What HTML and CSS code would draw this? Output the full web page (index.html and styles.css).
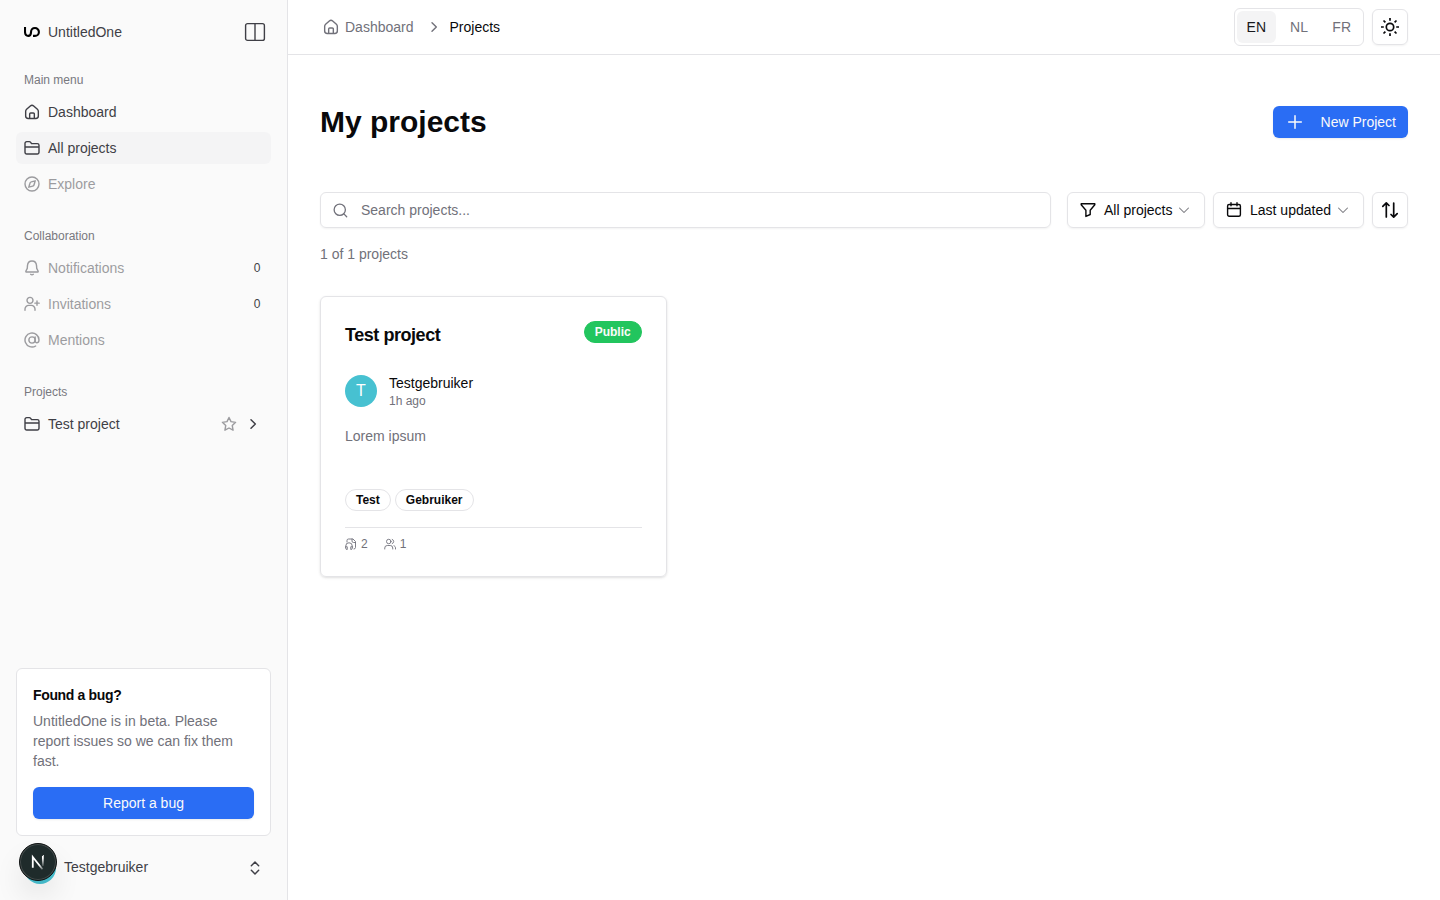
FILE: index.html
```html
<!DOCTYPE html>
<html lang="en">
<head>
<meta charset="utf-8">
<title>UntitledOne – Projects</title>
<link rel="stylesheet" href="styles.css">
</head>
<body>
<svg class="defs" aria-hidden="true">
  <symbol id="house" viewBox="0 0 24 24"><path d="M8.500 21.500V15a1.500 1.500 0 0 1 1.500-1.500h4a1.500 1.500 0 0 1 1.500 1.500v6.500"/><path d="M2.500 11c0-1.300.4-2.100 1.400-3l5.600-5c1.400-1.300 3.600-1.300 5 0l5.600 5c1 .9 1.400 1.700 1.400 3v7c0 2.500-1.400 3.700-3.800 3.700H6.300c-2.400 0-3.800-1.200-3.800-3.700z"/></symbol>
  <symbol id="folder" viewBox="0 0 24 24"><path d="M1.500 18.500V5a2.500 2.500 0 0 1 2.500-2.500h4c.8 0 1.500.4 2 1l1.300 2h8.700a2.500 2.500 0 0 1 2.500 2.500v10.500a2.500 2.500 0 0 1-2.500 2.500H4a2.500 2.500 0 0 1-2.500-2.500zM1.500 10.500h21"/></symbol>
  <symbol id="compass" viewBox="0 0 24 24"><circle cx="12" cy="12" r="10.500"/><path d="M16.800 7.200l-1.700 5.900a2.800 2.800 0 0 1-2 2l-5.900 1.700 1.700-5.900a2.800 2.800 0 0 1 2-2z"/></symbol>
  <symbol id="bell" viewBox="0 0 24 24"><path d="M12 1.500c-4 0-6.500 3-6.800 7L4.900 12.500 2.900 16.500c-.4 1 0 1.500 1 1.500h16.200c1 0 1.400-.5 1-1.500l-2-4-.3-4c-.3-4-2.800-7-6.800-7zM10 21.500c1.200 1 2.800 1 4 0"/></symbol>
  <symbol id="invite" viewBox="0 0 24 24"><circle cx="9" cy="6.500" r="4.500"/><path d="M1.500 21.500v-2a5.500 5.500 0 0 1 5.500-5.500h4a5.500 5.500 0 0 1 5.500 5.500v2M19.500 7.500v6.500M16.300 10.700h6.500"/></symbol>
  <symbol id="at" viewBox="0 0 24 24"><circle cx="12" cy="12" r="4.700"/><path d="M16.700 7.300V13c0 4.400 5.800 4 5.800-1A10.500 10.500 0 1 0 17.500 21"/></symbol>
  <symbol id="star" viewBox="0 0 24 24"><path d="M12 2.200l3 6.300 6.900 1-5 4.900 1.200 6.900-6.100-3.300-6.100 3.300 1.200-6.900-5-4.900 6.900-1z"/></symbol>
  <symbol id="right" viewBox="0 0 24 24"><path d="m9 5.500 6.500 6.500L9 18.500"/></symbol>
  <symbol id="down" viewBox="0 0 24 24"><path d="m3 8 9 9 9-9"/></symbol>
  <symbol id="file" viewBox="0 0 24 24"><path d="M4 8V5a3 3 0 0 1 3-3h9l5 5v12a3 3 0 0 1-3 3M14 2v4a3 3 0 0 0 3 3h4M1.500 17v-1a6.500 6.500 0 0 1 13 0v1M1.500 17.500h3V23h-1a2 2 0 0 1-2-2zM14.500 17.500h-3V23h1a2 2 0 0 0 2-2z"/></symbol>
  <symbol id="users" viewBox="0 0 24 24"><circle cx="9.500" cy="7" r="4.500"/><path d="M1.500 22v-2a5 5 0 0 1 5-5h6a5 5 0 0 1 5 5v2M16.500 2.800a4.500 4.500 0 0 1 0 8.400M20 15.500c2 .8 3 2.300 3 4.500v2"/></symbol>
</svg>

<div class="app">
  <aside class="sidebar">
    <div class="brand">
      <svg class="logo" viewBox="0 0 16 12"><path d="M1 .9v4.600C1 8.200 2.200 9.900 4.200 9.900S7 8.300 7 6.200C7 3.600 8.400 2 11 2a3.900 3.950 0 0 1 0 7.900H9"/></svg>
      <span>UntitledOne</span>
      <svg class="panel" viewBox="0 0 22 20"><rect x="1.600" y="1.600" width="18.800" height="16.800" rx="2"/><path d="M11 1.600v16.800"/></svg>
    </div>
    <nav class="nav">
      <section>
        <h2>Main menu</h2>
        <a class="item"><svg class="icon"><use href="#house"/></svg><span>Dashboard</span></a>
        <a class="item active"><svg class="icon"><use href="#folder"/></svg><span>All projects</span></a>
        <a class="item muted"><svg class="icon"><use href="#compass"/></svg><span>Explore</span></a>
      </section>
      <section>
        <h2>Collaboration</h2>
        <a class="item"><svg class="icon dim"><use href="#bell"/></svg><span class="dim">Notifications</span><b class="count">0</b></a>
        <a class="item"><svg class="icon dim"><use href="#invite"/></svg><span class="dim">Invitations</span><b class="count">0</b></a>
        <a class="item muted"><svg class="icon"><use href="#at"/></svg><span>Mentions</span></a>
      </section>
      <section>
        <h2>Projects</h2>
        <a class="item"><svg class="icon"><use href="#folder"/></svg><span>Test project</span><svg class="icon star"><use href="#star"/></svg><svg class="icon bold"><use href="#right"/></svg></a>
      </section>
    </nav>
    <div class="bug">
      <h3>Found a bug?</h3>
      <p>UntitledOne is in beta. Please report issues so we can fix them fast.</p>
      <button class="primary">Report a bug</button>
    </div>
    <div class="user">
      <div class="avatar">T</div>
      <span class="username">Testgebruiker</span>
      <svg class="icon updown" viewBox="0 0 24 24"><path d="m6.500 8.500 5.500-5.500 5.500 5.500M6.500 15.500 12 21l5.500-5.500"/></svg>
      <div class="devtool">
        <svg viewBox="0 0 40 40"><defs><linearGradient id="n1" x1="16" y1="14" x2="25" y2="28" gradientUnits="userSpaceOnUse"><stop offset=".65" stop-color="#fff"/><stop offset="1" stop-color="#fff" stop-opacity=".3"/></linearGradient><linearGradient id="n2" x1="0" y1="13" x2="0" y2="26" gradientUnits="userSpaceOnUse"><stop offset=".2" stop-color="#fff"/><stop offset="1" stop-color="#fff" stop-opacity="0"/></linearGradient></defs><path d="M14.200 26.500V14.500L25 28" stroke="url(#n1)"/><path d="M25.400 13.300h.01V24.500" stroke="url(#n2)"/></svg>
      </div>
    </div>
  </aside>

  <main class="main">
    <header class="topbar">
      <div class="crumbs">
        <svg class="icon"><use href="#house"/></svg><span>Dashboard</span>
        <svg class="icon sep"><use href="#right"/></svg><span class="current">Projects</span>
      </div>
      <div class="tools">
        <div class="langs"><span class="on">EN</span><span>NL</span><span>FR</span></div>
        <button class="square"><svg class="sun" viewBox="0 0 20 20"><circle cx="10" cy="10" r="3.700"/><path d="M10 1v2.800M10 16.200V19M1 10h2.800M16.200 10H19M3.500 3.500l1.900 1.900M14.600 14.600l1.900 1.900M3.500 16.500l1.900-1.900M14.600 5.400l1.900-1.900"/></svg></button>
      </div>
    </header>
    <div class="content">
      <div class="heading">
        <h1>My projects</h1>
        <button class="primary new"><svg viewBox="0 0 16 16"><path d="M8 1.700v12.600M1.700 8h12.600"/></svg><span>New Project</span></button>
      </div>
      <div class="filters">
        <div class="search"><svg viewBox="0 0 16 16"><circle cx="7.200" cy="7.200" r="6"/><path d="m11.600 11.600 3 3"/></svg><span>Search projects...</span></div>
        <div class="selects">
          <button class="select all"><svg class="icon" viewBox="0 0 16 16"><path d="M1.200 1.700h13.600v1.100L10.200 8.200v4.300l-4.300 1.900V8.200L1.200 2.800z"/></svg><span>All projects</span><svg class="chev"><use href="#down"/></svg></button>
          <button class="select"><svg class="icon" viewBox="0 0 16 16"><rect x="1.600" y="2.500" width="12.800" height="11.800" rx="1.500"/><path d="M1.600 6.500h12.800M5 .8v3M11 .8v3"/></svg><span>Last updated</span><svg class="chev"><use href="#down"/></svg></button>
          <button class="square"><svg class="sort" viewBox="0 0 18 18"><path d="M5.300 16V2M1.800 5.300l3.500-3.500L8 4.500M12.700 2v14M16.200 12.700l-3.500 3.500L10 13.500"/></svg></button>
        </div>
      </div>
      <p class="result">1 of 1 projects</p>
      <div class="grid">
        <article class="card">
          <div class="card-head"><h2>Test project</h2><span class="public">Public</span></div>
          <div class="owner"><div class="avatar">T</div><div><div class="name">Testgebruiker</div><div class="time">1h ago</div></div></div>
          <p class="desc">Lorem ipsum</p>
          <div class="tags"><span>Test</span><span>Gebruiker</span></div>
          <div class="stats"><span><svg><use href="#file"/></svg>2</span><span><svg><use href="#users"/></svg>1</span></div>
        </article>
      </div>
    </div>
  </main>
</div>
</body>
</html>
```
FILE: styles.css
```css
* { box-sizing: border-box; margin: 0; padding: 0; }
body { font: 14px/20px "Liberation Sans", Arial, sans-serif; color: #09090b; background: #fff; }
button { font: inherit; color: inherit; border: 0; background: none; }
svg { fill: none; stroke: currentColor; stroke-width: 1.4; stroke-linecap: round; stroke-linejoin: round; flex: none; }
.defs { display: none; }
.icon { width: 16px; height: 16px; }
svg.icon:has(use), .chev { stroke-width: 2.1; }
.app { display: flex; height: 100vh; overflow: hidden; }

.sidebar { width: 288px; flex: none; display: flex; flex-direction: column; padding: 16px 16px 8px; background: #fafafa; border-right: 1px solid #e4e4e7; color: #3f3f46; }
.brand { display: flex; align-items: center; gap: 8px; height: 32px; padding: 0 5px 0 8px; }
.brand .logo { width: 16px; height: 12px; color: #000; stroke-width: 2.1; stroke-linecap: butt; }
.panel { width: 22px; height: 20px; margin-left: auto; stroke-width: 1.4; }
.nav { display: flex; flex-direction: column; gap: 20px; padding-top: 16px; flex: 1; }
.nav section { display: flex; flex-direction: column; gap: 4px; }
.nav h2 { height: 32px; margin-bottom: -4px; padding-left: 8px; font-size: 12px; line-height: 32px; font-weight: 400; color: #78787e; }
.item { display: flex; align-items: center; gap: 8px; height: 32px; padding: 0 8px; border-radius: 6px; }
.item.active { background: #f4f4f5; }
.muted, .dim { opacity: .5; }
.count { margin-left: auto; width: 12px; text-align: center; font-weight: 400; font-size: 12px; }
.star { margin-left: auto; opacity: .5; }
svg.icon.bold:has(use), .updown { stroke-width: 2.2; }
.sidebar .star + .bold { margin-right: 2px; }

.bug { background: #fff; border: 1px solid #e4e4e7; border-radius: 6px; padding: 16px; }
.bug h3 { font-size: 14px; letter-spacing: -.35px; color: #09090b; }
.bug p { margin: 6px 0 16px; color: #71717a; }
.primary { display: flex; align-items: center; justify-content: center; height: 32px; border-radius: 6px; background: #2a6df4; color: #fafafa; box-shadow: 0 1px 2px rgba(0,0,0,.08); }
.bug .primary { width: 100%; }
.user { position: relative; display: flex; align-items: center; gap: 8px; height: 48px; margin-top: 8px; padding: 0 8px; }
.username { padding-bottom: 2px; }
.user > .icon { margin-left: auto; }
.avatar { width: 32px; height: 32px; border-radius: 50%; background: #47c1d1; color: #fff; font-size: 16px; line-height: 32px; text-align: center; flex: none; }
.devtool { position: absolute; left: 3px; top: -1px; width: 38px; height: 38px; border-radius: 50%; background: #1f2b2b; border: 1px solid #101313; box-shadow: inset 0 0 0 1px #454d4d, 0 16px 32px -8px rgba(0,0,0,.24); }
.devtool svg { display: block; width: 36px; height: 36px; stroke-width: 2; stroke-linecap: butt; stroke-linejoin: miter; }

.main { flex: 1; }
.topbar { display: flex; align-items: center; justify-content: space-between; height: 55px; padding: 0 32px 0 35px; border-bottom: 1px solid #e4e4e7; }
.crumbs { display: flex; align-items: center; gap: 6px; color: #71717a; }
.crumbs .current { color: #09090b; }
.crumbs .sep { margin: 0 2px 0 6px; }
.tools { display: flex; align-items: center; gap: 8px; }
.langs { display: flex; gap: 4px; height: 38px; width: 130px; padding: 2px; border: 1px solid #e4e4e7; border-radius: 6px; color: #71717a; }
.langs span { flex: 1; line-height: 32px; text-align: center; border-radius: 6px; }
.langs .on { background: #f4f4f5; color: #18181b; }
.square { display: flex; align-items: center; justify-content: center; width: 36px; height: 36px; }
.square, .select, .search { border: 1px solid #e4e4e7; border-radius: 6px; box-shadow: 0 1px 2px rgba(0,0,0,.05); }
.sun { width: 20px; height: 20px; stroke-width: 1.7; stroke-linecap: butt; }
.sort { width: 18px; height: 18px; stroke-width: 1.7; }

.content { padding: 49px 32px; }
.heading { display: flex; align-items: center; justify-content: space-between; height: 36px; }
h1 { font-size: 30px; line-height: 36px; }
.new { width: 135px; justify-content: space-between; padding: 0 12px 0 14px; }
.new svg { width: 16px; height: 16px; stroke-width: 1.5; }
.filters { display: flex; gap: 16px; margin-top: 52px; }
.search { flex: 1; display: flex; align-items: center; gap: 13px; height: 36px; padding-left: 12px; color: #71717a; }
.search svg { width: 15px; height: 15px; }
.selects { display: flex; gap: 8px; }
.select { display: flex; align-items: center; gap: 8px; width: 151px; height: 36px; padding: 0 12px; }
.select.all { width: 138px; }
.chev { width: 12px; height: 12px; margin-left: -2px; color: #77777d; }
.result { margin-top: 16px; color: #71717a; }
.grid { display: grid; grid-template-columns: repeat(3, 1fr); gap: 24px; margin-top: 32px; }
.card { height: 281px; padding: 24px; border: 1px solid #e4e4e7; border-radius: 6px; box-shadow: 0 1px 3px rgba(0,0,0,.1), 0 1px 2px -1px rgba(0,0,0,.1); }
.card-head { display: flex; justify-content: space-between; align-items: flex-start; }
.card h2 { font-size: 18px; line-height: 28px; letter-spacing: -.45px; }
.public, .tags span { height: 22px; padding: 0 10px; border: 1px solid #22c55e; border-radius: 11px; font-size: 12px; line-height: 20px; font-weight: 700; }
.public { background: #22c55e; color: #fafafa; }
.owner { display: flex; align-items: center; gap: 12px; height: 36px; margin-top: 24px; }
.time { font-size: 12px; line-height: 16px; color: #71717a; }
.desc { margin-top: 17px; height: 63px; color: #71717a; }
.tags { display: flex; gap: 4px; }
.tags span { border-color: #e4e4e7; }
.stats { display: flex; gap: 16px; margin-top: 16px; padding-top: 8px; border-top: 1px solid #e4e4e7; color: #71717a; font-size: 12px; line-height: 16px; }
.stats span { display: flex; align-items: center; gap: 4px; }
.stats svg { width: 12px; height: 12px; stroke-width: 1.8; }
```
